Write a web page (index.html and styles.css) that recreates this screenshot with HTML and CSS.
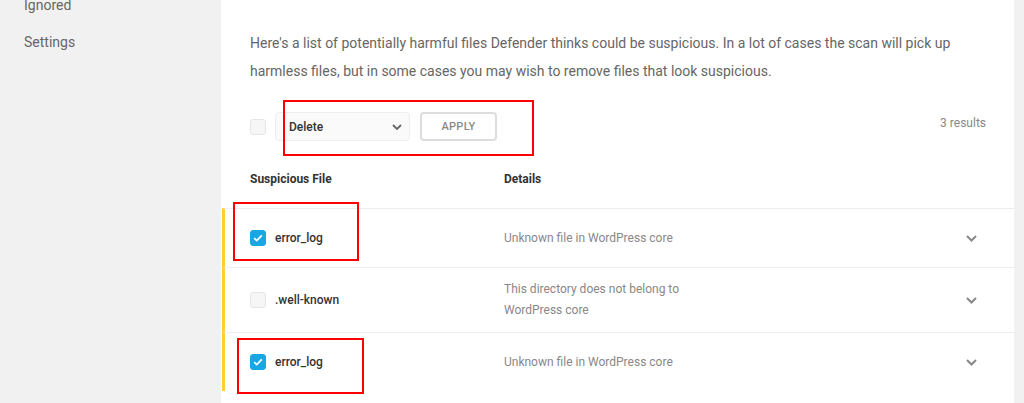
FILE: index.html
```html
<!DOCTYPE html>
<html lang="en">
<head>
    <meta charset="UTF-8">
    <meta name="viewport" content="width=device-width, initial-scale=1.0">
    <title>Defender - Suspicious Files</title>
    <link rel="stylesheet" href="styles.css">
</head>
<body>
    <div class="layout">
        <div class="sidebar">
            <ul class="side-nav">
                <li>Ignored</li>
                <li>Settings</li>
            </ul>
        </div>

        <div class="main">
            <p class="intro">Here's a list of potentially harmful files Defender thinks could be suspicious. In a lot of cases the scan will pick up harmless files, but in some cases you may wish to remove files that look suspicious.</p>

            <div class="bulk-bar">
                <span class="checkbox"></span>
                <div class="select">
                    <span>Delete</span>
                    <svg class="chevron" width="10" height="6" viewBox="0 0 10 6"><path d="M1 1l4 4 4-4" fill="none" stroke="#666" stroke-width="1.8"/></svg>
                </div>
                <button class="apply">APPLY</button>
                <span class="count">3 results</span>
            </div>

            <div class="table-head">
                <span class="col-file">Suspicious File</span>
                <span class="col-details">Details</span>
            </div>

            <div class="row">
                <div class="col-file">
                    <span class="checkbox checked">
                        <svg width="10" height="8" viewBox="0 0 10 8"><path d="M1.2 4.2l2.6 2.4L8.8 1.4" fill="none" stroke="#fff" stroke-width="1.8"/></svg>
                    </span>
                    <span class="file-name">error_log</span>
                </div>
                <div class="col-details">Unknown file in WordPress core</div>
                <svg class="row-toggle" width="11" height="7" viewBox="0 0 11 7"><path d="M1 1l4.5 4.5L10 1" fill="none" stroke="#888" stroke-width="2"/></svg>
            </div>

            <div class="row">
                <div class="col-file">
                    <span class="checkbox"></span>
                    <span class="file-name">.well-known</span>
                </div>
                <div class="col-details">This directory does not belong to<br>WordPress core</div>
                <svg class="row-toggle" width="11" height="7" viewBox="0 0 11 7"><path d="M1 1l4.5 4.5L10 1" fill="none" stroke="#888" stroke-width="2"/></svg>
            </div>

            <div class="row">
                <div class="col-file">
                    <span class="checkbox checked">
                        <svg width="10" height="8" viewBox="0 0 10 8"><path d="M1.2 4.2l2.6 2.4L8.8 1.4" fill="none" stroke="#fff" stroke-width="1.8"/></svg>
                    </span>
                    <span class="file-name">error_log</span>
                </div>
                <div class="col-details">Unknown file in WordPress core</div>
                <svg class="row-toggle" width="11" height="7" viewBox="0 0 11 7"><path d="M1 1l4.5 4.5L10 1" fill="none" stroke="#888" stroke-width="2"/></svg>
            </div>

            <!-- annotation boxes drawn over the screenshot -->
            <div class="mark mark-bulk"></div>
            <div class="mark mark-row1"></div>
            <div class="mark mark-row3"></div>
        </div>
    </div>
</body>
</html>
```

FILE: styles.css
```css
body {
    margin: 0;
    font-family: Roboto, 'Open Sans', sans-serif;
    background-color: #f1f1f1;
    color: #333;
    overflow: hidden;
}
.layout {
    display: flex;
    height: 403px;
}
.sidebar {
    width: 221px;
    flex-shrink: 0;
}
.side-nav {
    list-style: none;
    margin: -13px 0 0;
    padding: 0 0 0 24px;
}
.side-nav li {
    font-size: 14px;
    line-height: 37px;
    color: #666;
}
.main {
    position: relative;
    width: 793px;
    background-color: #fff;
    padding-top: 29px;
}
.intro {
    margin: 0;
    padding: 0 40px 0 29px;
    font-size: 14px;
    line-height: 28px;
    color: #666;
}
.bulk-bar {
    display: flex;
    align-items: center;
    margin-top: 27px;
    padding: 0 28px 0 29px;
    height: 29px;
}
.checkbox {
    display: inline-flex;
    align-items: center;
    justify-content: center;
    width: 16px;
    height: 16px;
    box-sizing: border-box;
    border: 1px solid #e6e6e6;
    border-radius: 3px;
    background-color: #f6f6f6;
    flex-shrink: 0;
}
.checkbox.checked {
    background-color: #17a8e3;
    border-color: #17a8e3;
}
.select {
    display: flex;
    align-items: center;
    justify-content: space-between;
    margin-left: 9px;
    width: 135px;
    height: 29px;
    box-sizing: border-box;
    padding: 0 7px 0 13px;
    border: 1px solid #eee;
    border-radius: 4px;
    background-color: #fafafa;
    font-size: 12px;
    font-weight: 500;
    color: #333;
}
.apply {
    margin-left: 10px;
    width: 77px;
    height: 29px;
    border: 2px solid #ddd;
    border-radius: 4px;
    background-color: #fff;
    font-family: Roboto, sans-serif;
    font-size: 11px;
    font-weight: 500;
    color: #888;
    letter-spacing: 0.3px;
}
.count {
    margin-left: auto;
    margin-bottom: 8px;
    font-size: 12px;
    color: #888;
}
.table-head {
    display: flex;
    margin-top: 29px;
    padding: 0 0 20px 29px;
    font-size: 12px;
    font-weight: 700;
    line-height: 18px;
    color: #333;
}
.col-file {
    width: 254px;
    display: flex;
    align-items: center;
    flex-shrink: 0;
}
.col-details {
    flex: 1;
}
.row {
    display: flex;
    align-items: center;
    margin-left: 1px;
    min-height: 36px;
    padding: 11px 37px 11px 25px;
    border-top: 1px solid #eee;
    border-left: 3px solid #fecf2f;
}
.row:last-of-type {
    border-bottom: 1px solid #eee;
}
.row .col-details {
    font-size: 12px;
    line-height: 21px;
    color: #888;
}
.file-name {
    margin-left: 9px;
    font-size: 12px;
    font-weight: 500;
    color: #333;
}
.row-toggle {
    flex-shrink: 0;
}
.mark {
    position: absolute;
    border: 2px solid #f00;
    box-sizing: border-box;
}
.mark-bulk {
    left: 62px;
    top: 100px;
    width: 251px;
    height: 56px;
}
.mark-row1 {
    left: 12px;
    top: 202px;
    width: 126px;
    height: 59px;
}
.mark-row3 {
    left: 16px;
    top: 338px;
    width: 127px;
    height: 56px;
}
```
